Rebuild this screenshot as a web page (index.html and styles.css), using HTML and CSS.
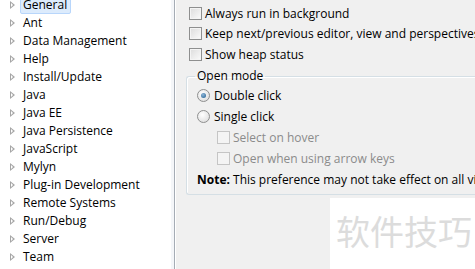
FILE: index.html
```html
<!DOCTYPE html>
<html lang="en">
<head>
    <meta charset="UTF-8">
    <title>Preferences</title>
    <link rel="stylesheet" href="styles.css">
</head>
<body>
    <div class="window">
        <div class="tree">
            <div class="node"><span class="twisty"></span><span class="label selected">General</span></div>
            <div class="node"><span class="twisty"></span><span class="label">Ant</span></div>
            <div class="node"><span class="twisty"></span><span class="label">Data Management</span></div>
            <div class="node"><span class="twisty"></span><span class="label">Help</span></div>
            <div class="node"><span class="twisty"></span><span class="label">Install/Update</span></div>
            <div class="node"><span class="twisty"></span><span class="label">Java</span></div>
            <div class="node"><span class="twisty"></span><span class="label">Java EE</span></div>
            <div class="node"><span class="twisty"></span><span class="label">Java Persistence</span></div>
            <div class="node"><span class="twisty"></span><span class="label">JavaScript</span></div>
            <div class="node"><span class="twisty"></span><span class="label">Mylyn</span></div>
            <div class="node"><span class="twisty"></span><span class="label">Plug-in Development</span></div>
            <div class="node"><span class="twisty"></span><span class="label">Remote Systems</span></div>
            <div class="node"><span class="twisty"></span><span class="label">Run/Debug</span></div>
            <div class="node"><span class="twisty"></span><span class="label">Server</span></div>
            <div class="node"><span class="twisty"></span><span class="label">Team</span></div>
        </div>

        <div class="page">
            <div class="option first"><span class="check"></span>Always run in background</div>
            <div class="option"><span class="check"></span>Keep next/previous editor, view and perspectives dialog open</div>
            <div class="option"><span class="check"></span>Show heap status</div>

            <fieldset class="group">
                <legend>Open mode</legend>
                <div class="option"><span class="radio on"></span>Double click</div>
                <div class="option"><span class="radio"></span>Single click</div>
                <div class="option sub disabled"><span class="check"></span>Select on hover</div>
                <div class="option sub disabled"><span class="check"></span>Open when using arrow keys</div>
                <div class="note"><b>Note:</b> This preference may not take effect on all views</div>
            </fieldset>

            <div class="bottom">
                <div class="filler"></div>
                <div class="stamp">软件技巧</div>
            </div>
        </div>
    </div>
</body>
</html>
```

FILE: styles.css
```css
body {
    margin: 0;
    font-family: 'Open Sans', 'Noto Sans', sans-serif;
    font-size: 12px;
    color: #000;
    overflow: hidden;
}

.window {
    display: flex;
    width: 475px;
    height: 269px;
    overflow: hidden;
}

/* left tree */
.tree {
    width: 174px;
    flex-shrink: 0;
    background: #fff;
    border-right: 1px solid #a5acb5;
    box-shadow: inset -3px 0 0 #f4f6f9;
    margin-top: -4px;
}

.node {
    display: flex;
    align-items: center;
    height: 18px;
    white-space: nowrap;
}

.twisty {
    width: 0;
    height: 0;
    margin-left: 10px;
    margin-right: 5px;
    border-top: 4px solid transparent;
    border-bottom: 4px solid transparent;
    border-left: 5px solid #a6a6a6;
    position: relative;
}

.twisty::after {
    content: '';
    position: absolute;
    left: -4px;
    top: -2px;
    border-top: 2px solid transparent;
    border-bottom: 2px solid transparent;
    border-left: 2px solid #fff;
}

.label {
    padding: 0 3px 1px 2px;
    border: 1px solid transparent;
    line-height: 15px;
}

.label.selected {
    background: #dcebfc;
    border-color: #b8d6fb;
    border-radius: 2px;
}

/* right page */
.page {
    flex: 1;
    background: #f0f0f0;
    border-left: 1px solid #fff;
    padding: 3px 0 0 13px;
    display: flex;
    flex-direction: column;
    min-width: 0;
    overflow: hidden;
}

.option {
    display: flex;
    align-items: center;
    height: 21px;
    white-space: nowrap;
}

.option.first {
    height: 20px;
}

.check {
    width: 11px;
    height: 11px;
    border: 1px solid #8e8f8f;
    background: linear-gradient(135deg, #dcdcdc, #fbfbfb);
    box-shadow: inset 0 0 0 1px #f4f4f4;
    margin-right: 3px;
    flex-shrink: 0;
}

.radio {
    width: 11px;
    height: 11px;
    border: 1px solid #8e8f8f;
    border-radius: 50%;
    background: radial-gradient(circle at 40% 35%, #fff, #d8d8d8);
    margin-right: 4px;
    flex-shrink: 0;
    position: relative;
}

.radio.on::after {
    content: '';
    position: absolute;
    left: 3px;
    top: 3px;
    width: 5px;
    height: 5px;
    border-radius: 50%;
    background: radial-gradient(circle at 40% 35%, #8fb6d8, #1f5d8f);
}

.group {
    margin: 4px 0 0 -3px;
    padding: 2px 0 4px 10px;
    border: 1px solid #d5dfe5;
    border-right: none;
    border-radius: 3px 0 0 3px;
    box-shadow: inset 1px 1px 0 #fff;
    min-width: 0;
}

.group legend {
    padding: 0 2px;
    margin-left: -2px;
    line-height: 14px;
}

.option.sub {
    padding-left: 20px;
}

.disabled {
    color: #8b8b8b;
}

.disabled .check {
    border-color: #c5c5c5;
    background: #f4f4f4;
}

.note {
    height: 21px;
    line-height: 21px;
    white-space: nowrap;
}

.bottom {
    flex: 1;
    display: flex;
    margin-top: 3px;
    margin-left: -13px;
}

.filler {
    width: 154px;
}

.stamp {
    flex: 1;
    background: #fff;
    color: #dcdcdc;
    font-family: 'Noto Sans CJK SC', sans-serif;
    font-size: 34px;
    padding: 8px 0 0 6px;
    white-space: nowrap;
}
```
